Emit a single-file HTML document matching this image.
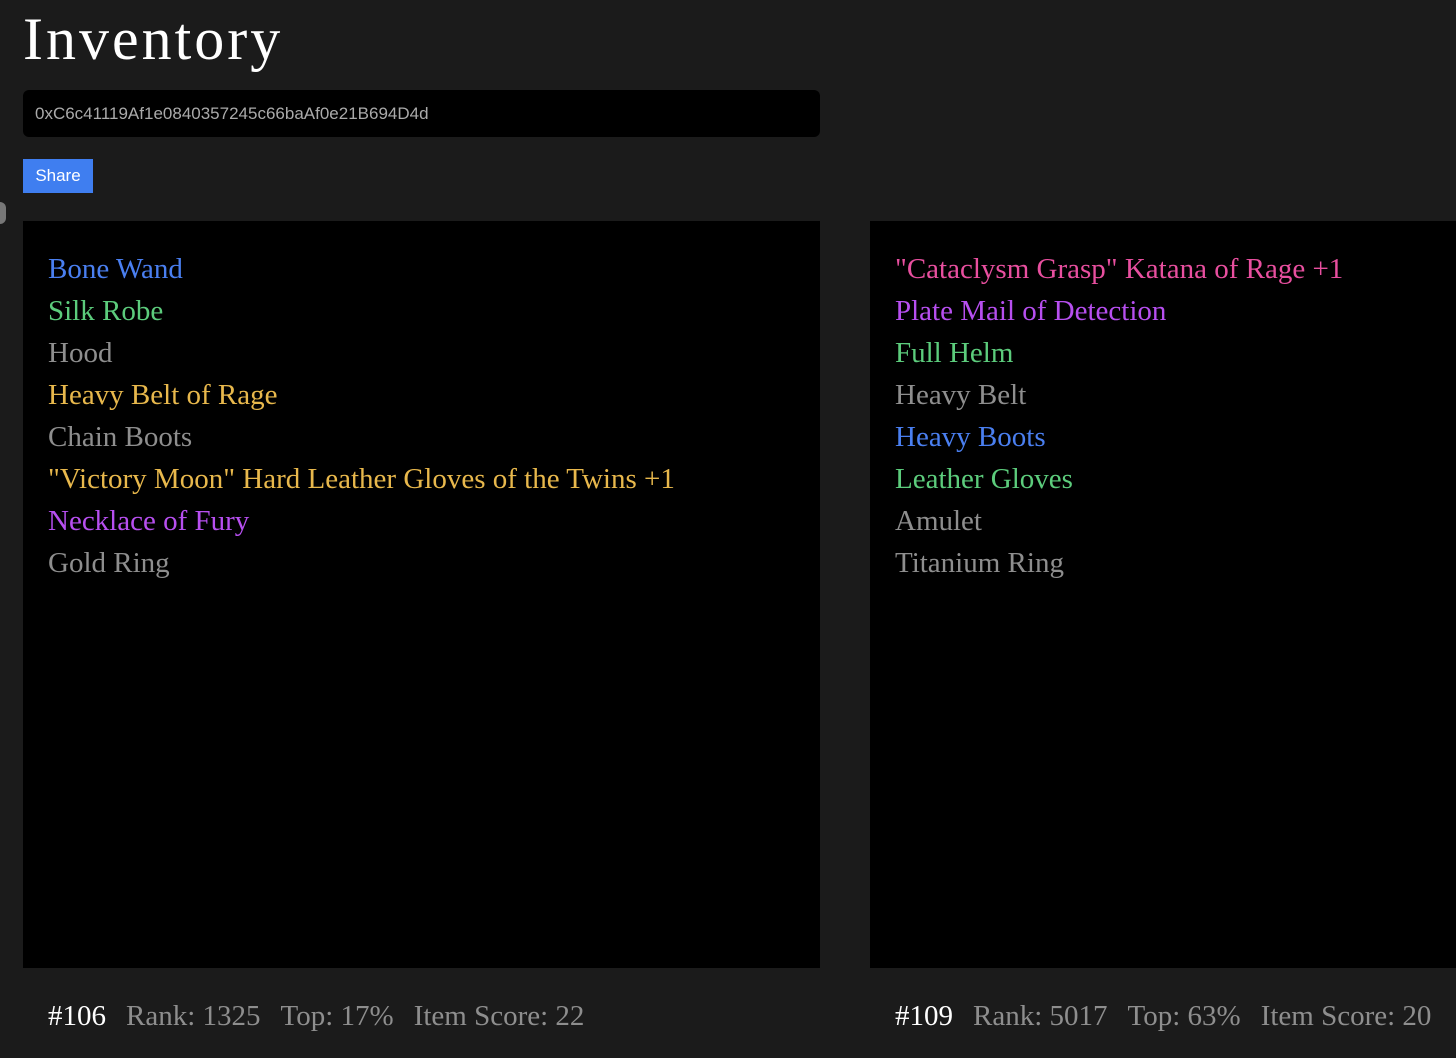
<!DOCTYPE html>
<html><head><style>
body{margin:0;background:#1b1b1b;width:1456px;height:1058px;overflow:hidden;position:relative;font-family:"Liberation Serif",serif}
h1{position:absolute;left:23px;top:4px;margin:0;font-weight:normal;color:#fff;font-size:60px;letter-spacing:3px;line-height:70px}
.addr{position:absolute;left:23px;top:90px;width:797px;height:47px;background:#000;border-radius:6px;color:#aaa;font:17px "Liberation Sans",sans-serif;line-height:47px;box-sizing:border-box;padding-left:12px}
.share{position:absolute;left:23px;top:159px;width:70px;height:34px;background:#3f7ef0;color:#fff;font:17px "Liberation Sans",sans-serif;line-height:34px;text-align:center}
.dot{position:absolute;left:-6px;top:202px;width:12px;height:22px;border-radius:6px;background:#777}
.panel{position:absolute;top:221px;height:747px;background:#000}
.list{position:absolute;top:248px}
.list div{font-size:29px;line-height:42px;height:42px;white-space:nowrap}
.b{color:#4a7ff0}.g{color:#5ccc7c}.w{color:#8e8e8e}.y{color:#e8b84c}.p{color:#b74ff0}.k{color:#e84f9f}
.foot{position:absolute;top:1000px;font-size:29px;color:#8e8e8e;white-space:nowrap}
.foot span{margin-right:20px}
.foot .n{color:#fff}
</style></head><body>
<h1>Inventory</h1>
<div class="addr">0xC6c41119Af1e0840357245c66baAf0e21B694D4d</div>
<div class="share">Share</div>
<div class="dot"></div>
<div class="panel" style="left:23px;width:797px"></div>
<div class="panel" style="left:870px;width:586px"></div>
<div class="list" style="left:48px">
<div class="b">Bone Wand</div>
<div class="g">Silk Robe</div>
<div class="w">Hood</div>
<div class="y">Heavy Belt of Rage</div>
<div class="w">Chain Boots</div>
<div class="y">"Victory Moon" Hard Leather Gloves of the Twins +1</div>
<div class="p">Necklace of Fury</div>
<div class="w">Gold Ring</div>
</div>
<div class="list" style="left:895px">
<div class="k">"Cataclysm Grasp" Katana of Rage +1</div>
<div class="p">Plate Mail of Detection</div>
<div class="g">Full Helm</div>
<div class="w">Heavy Belt</div>
<div class="b">Heavy Boots</div>
<div class="g">Leather Gloves</div>
<div class="w">Amulet</div>
<div class="w">Titanium Ring</div>
</div>
<div class="foot" style="left:48px"><span class="n">#106</span><span>Rank: 1325</span><span>Top: 17%</span><span>Item Score: 22</span></div>
<div class="foot" style="left:895px"><span class="n">#109</span><span>Rank: 5017</span><span>Top: 63%</span><span>Item Score: 20</span></div>
</body></html>
